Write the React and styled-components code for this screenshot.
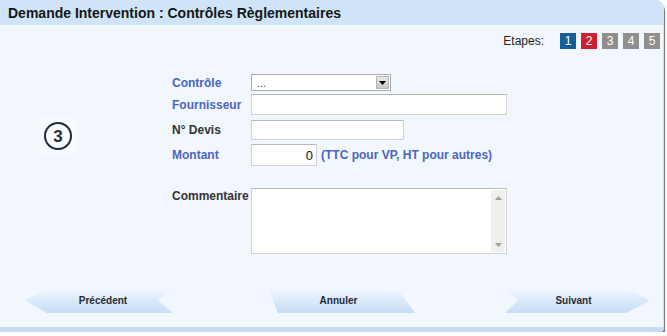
import React from 'react';
import styled, { createGlobalStyle } from 'styled-components';

const Global = createGlobalStyle`
  html, body { margin: 0; padding: 0; background: #ffffff; }
  body { font-family: Arial, "Liberation Sans", sans-serif; }
  * { box-sizing: border-box; }
`;

const Panel = styled.div`
  width: 664px;
  height: 332px;
  background: #f1f7fd;
  border-top-right-radius: 8px;
  border-bottom-right-radius: 3px;
  border-right: 1px solid #d3e2f2;
  border-bottom: 5px solid #c6ddf5;
  box-shadow: 1px 3px 1px #6f6f6f;
  display: flex;
  flex-direction: column;
  overflow: hidden;
`;

const Header = styled.div`
  height: 25px;
  flex: none;
  background: #cfe4f8;
  padding: 2px 0 0 8px;
  font-size: 14px;
  font-weight: bold;
  line-height: 23px;
  color: #161616;
`;

const StepsBar = styled.div`
  margin-top: 8px;
  height: 16px;
  display: flex;
  justify-content: flex-end;
  align-items: center;
  gap: 5px;
  padding-right: 3px;
`;

const StepsLabel = styled.span`
  font-size: 12px;
  color: #222;
  margin-right: 11px;
`;

const stepColors = { done: '#155f9b', current: '#cf1f2e', todo: '#8f8f8f' };

const Step = styled.span`
  width: 16px;
  height: 16px;
  background: ${(p) => stepColors[p.$state]};
  color: #ffffff;
  font-size: 12px;
  line-height: 16px;
  text-align: center;
`;

const Main = styled.div`
  margin-top: 25px;
  display: grid;
  grid-template-columns: 172px 1fr;
  height: 179px;
`;

const StepIconCell = styled.div`
  padding: 44px 0 0 39px;
`;

const StepIconBg = styled.div`
  width: 38px;
  height: 36px;
  background: #f8fbfe;
  display: flex;
  align-items: center;
  justify-content: center;
`;

const StepCircle = styled.div`
  width: 28px;
  height: 28px;
  border: 2px solid #1f2c3a;
  border-radius: 50%;
  display: flex;
  align-items: center;
  justify-content: center;
  font-size: 17px;
  font-weight: bold;
  color: #1f2c3a;
  line-height: 1;
`;

const Form = styled.div`
  display: flex;
  flex-direction: column;
`;

const Row = styled.div`
  display: grid;
  grid-template-columns: 79px auto;
  align-items: ${(p) => (p.$top ? 'start' : 'center')};
  margin-top: ${(p) => p.$gap || 0}px;
`;

const Label = styled.label`
  font-size: 12px;
  font-weight: bold;
  color: ${(p) => (p.$accent ? '#4a66c3' : '#333333')};
  padding-top: ${(p) => (p.$top ? '1px' : '0')};
`;

const FieldLine = styled.div`
  display: flex;
  align-items: center;
  gap: 4px;
`;

const TextInput = styled.input`
  width: ${(p) => p.$w}px;
  height: ${(p) => p.$h || 20}px;
  border: 1px solid #d2d2d2;
  border-top-color: #b9b9b9;
  background: #ffffff;
  font-family: Arial, "Liberation Sans", sans-serif;
  font-size: 13px;
  color: #111;
  padding: 0 3px;
  text-align: ${(p) => p.$align || 'left'};
  outline: none;
  margin: 0;
`;

const Hint = styled.span`
  font-size: 12px;
  font-weight: bold;
  color: #4a66c3;
`;

const Select = styled.div`
  width: 140px;
  height: 17px;
  border: 1px solid #a9adb3;
  background: #ffffff;
  display: flex;
  align-items: center;
  justify-content: space-between;
  padding: 0 1px 0 5px;
  font-size: 11px;
  color: #444;
`;

const SelectButton = styled.span`
  width: 13px;
  height: 13px;
  background: linear-gradient(#e9e9e9, #c9c9c9);
  border: 1px solid #b4b4b4;
  display: flex;
  align-items: center;
  justify-content: center;
`;

const TextArea = styled.div`
  width: 256px;
  height: 66px;
  border: 1px solid #d2d2d2;
  border-top-color: #bcbcbc;
  background: #ffffff;
  display: flex;
`;

const AreaInput = styled.textarea`
  flex: 1;
  border: none;
  resize: none;
  outline: none;
  background: transparent;
  font-family: Arial, "Liberation Sans", sans-serif;
  font-size: 12px;
`;

const ScrollTrack = styled.div`
  width: 14px;
  margin: 1px;
  background: #efefef;
  display: flex;
  flex-direction: column;
  justify-content: space-between;
  align-items: center;
  padding: 6px 0 5px;
`;

const Buttons = styled.div`
  margin-top: 35px;
  height: 25px;
  display: flex;
  padding-left: 25px;
`;

const shapes = {
  prev: 'polygon(0 50%, 22px 0, 100% 0, calc(100% - 15px) 50%, 100% 100%, 22px 100%)',
  cancel: 'polygon(0 0, calc(100% - 18px) 0, 100% 100%, 10px 100%)',
  next: 'polygon(0 0, calc(100% - 24px) 0, 100% 50%, calc(100% - 24px) 100%, 0 100%, 13px 50%)',
};

const NavButton = styled.button`
  width: ${(p) => p.$w}px;
  height: 25px;
  margin-left: ${(p) => p.$offset || 0}px;
  border: none;
  padding: 0 ${(p) => p.$padR || 0}px 0 ${(p) => p.$padL || 0}px;
  clip-path: ${(p) => shapes[p.$shape]};
  background: linear-gradient(to bottom, #f2f8fe 0%, #ddebfa 45%, #c5ddf6 100%);
  font-family: Arial, "Liberation Sans", sans-serif;
  font-size: 10px;
  font-weight: bold;
  color: #1e2a38;
  cursor: pointer;
`;

const Arrow = ({ up }) => (
  <svg width="7" height="4" viewBox="0 0 7 4">
    <path d={up ? 'M0 4 L3.5 0 L7 4 Z' : 'M0 0 L3.5 4 L7 0 Z'} fill="#a0a0a0" />
  </svg>
);

export default function App() {
  return (
    <>
      <Global />
      <Panel>
        <Header>Demande Intervention : Contrôles Règlementaires</Header>
        <StepsBar>
          <StepsLabel>Etapes:</StepsLabel>
          <Step $state="done">1</Step>
          <Step $state="current">2</Step>
          <Step $state="todo">3</Step>
          <Step $state="todo">4</Step>
          <Step $state="todo">5</Step>
        </StepsBar>
        <Main>
          <StepIconCell>
            <StepIconBg>
              <StepCircle>3</StepCircle>
            </StepIconBg>
          </StepIconCell>
          <Form>
            <Row>
              <Label $accent>Contrôle</Label>
              <Select>
                <span>...</span>
                <SelectButton>
                  <svg width="7" height="4" viewBox="0 0 7 4">
                    <path d="M0 0 L7 0 L3.5 4 Z" fill="#000" />
                  </svg>
                </SelectButton>
              </Select>
            </Row>
            <Row $gap={3}>
              <Label $accent>Fournisseur</Label>
              <TextInput $w={256} $h={21} defaultValue="" />
            </Row>
            <Row $gap={5}>
              <Label>N° Devis</Label>
              <TextInput $w={153} defaultValue="" />
            </Row>
            <Row $gap={4}>
              <Label $accent>Montant</Label>
              <FieldLine>
                <TextInput $w={66} $h={22} $align="right" defaultValue="0" />
                <Hint>(TTC pour VP, HT pour autres)</Hint>
              </FieldLine>
            </Row>
            <Row $gap={22} $top>
              <Label $top>Commentaire</Label>
              <TextArea>
                <AreaInput defaultValue="" />
                <ScrollTrack>
                  <Arrow up />
                  <Arrow />
                </ScrollTrack>
              </TextArea>
            </Row>
          </Form>
        </Main>
        <Buttons>
          <NavButton $shape="prev" $w={148} $padL={8}>Précédent</NavButton>
          <NavButton $shape="cancel" $w={147} $offset={95} $padR={6}>Annuler</NavButton>
          <NavButton $shape="next" $w={145} $offset={90} $padR={8}>Suivant</NavButton>
        </Buttons>
      </Panel>
    </>
  );
}
